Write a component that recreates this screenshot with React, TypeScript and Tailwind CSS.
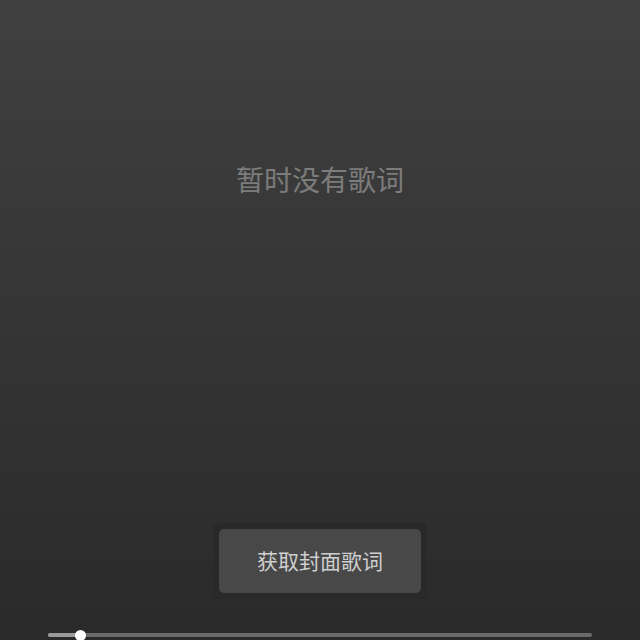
import React from 'react';

const font = { fontFamily: '"Noto Sans CJK SC", "Noto Sans", sans-serif' };

export default function App() {
  const progress = 6;
  return (
    <div
      className="w-[640px] h-[640px] flex flex-col bg-gradient-to-b from-[#404040] to-[#2a2a2a] overflow-hidden"
      style={font}
    >
      <div className="h-[179px] shrink-0" />
      <div className="text-center text-[28px] leading-[0] text-[#7c7c7c]">暂时没有歌词</div>
      <div className="flex-1" />
      <div className="flex justify-center">
        <div className="p-[6px] rounded-[6px] bg-[#292929]">
          <button className="w-[202px] h-[64px] rounded-[5px] bg-[#484848] text-[21px] text-[#cfcfcf] flex items-center justify-center">
            获取封面歌词
          </button>
        </div>
      </div>
      <div className="h-[31px] shrink-0" />
      <div className="px-[48px] h-[10px] flex items-center">
        <div className="relative w-full h-[4px] rounded-full bg-[#6a6a6a]">
          <div className="absolute left-0 top-0 h-full rounded-full bg-[#9a9a9a]" style={{ width: `${progress}%` }} />
          <div
            className="absolute top-1/2 w-[11px] h-[11px] -mt-[5.5px] -ml-[5.5px] rounded-full bg-white"
            style={{ left: `${progress}%` }}
          />
        </div>
      </div>
    </div>
  );
}
